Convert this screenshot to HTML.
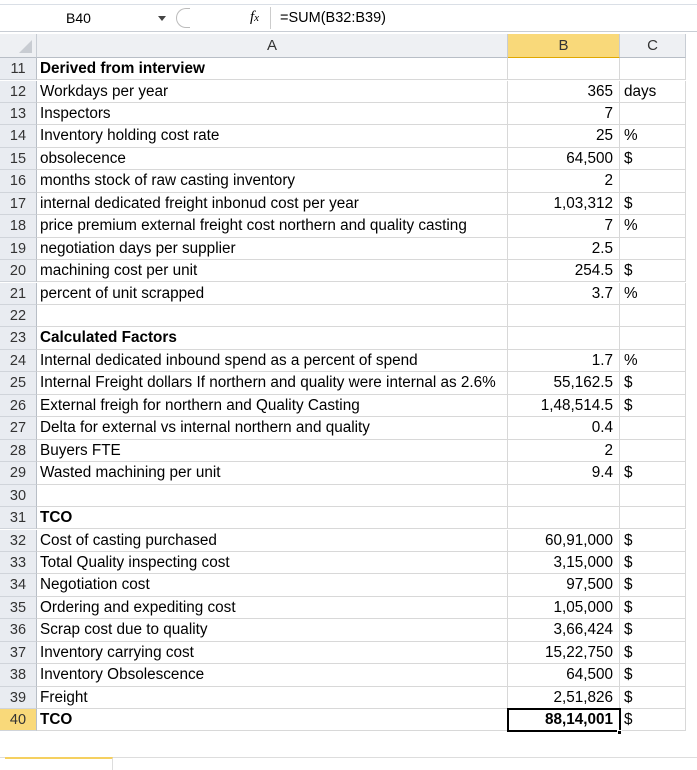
<!DOCTYPE html>
<html><head><meta charset="utf-8"><style>
*{margin:0;padding:0;box-sizing:border-box}
body{width:697px;height:770px;background:#fff;font-family:"Liberation Sans",sans-serif;position:relative;overflow:hidden}
.fb{position:absolute;top:4px;left:0;width:697px;height:28px;border-top:1px solid #dadfe6;border-bottom:1px solid #c8cdd4;background:#fff}
.hdr{position:absolute;top:34px;height:24px;background:#eef0f3;border-bottom:1px solid #b8bec6;font-size:15px;color:#333;text-align:center;line-height:24px;border-right:1px solid #c8cdd4}
.rh{position:absolute;left:0;width:37px;background:#e9ecf1;border-right:1px solid #b8bec6;border-bottom:1px solid #d0d4da;text-align:center;font-size:14.5px;color:#333}
.c{position:absolute;border-right:1px solid #d8d8d8;border-bottom:1px solid #d8d8d8;font-size:15.3px;white-space:nowrap;overflow:visible;color:#000;padding:0 3px}
.b{font-weight:bold}
</style></head><body>
<div class="fb">
<div style="position:absolute;left:66px;top:5px;font-size:14px">B40</div>
<div style="position:absolute;left:158px;top:11px;width:0;height:0;border-left:4px solid transparent;border-right:4px solid transparent;border-top:5px solid #444"></div>
<div style="position:absolute;left:176px;top:3px;width:14px;height:20px;border:1px solid #bbb;border-right:none;border-radius:10px 0 0 10px"></div>
<div style="position:absolute;left:250px;top:4px;font-size:15px;font-style:italic;font-family:'Liberation Serif',serif">f<span style="font-size:11px">x</span></div>
<div style="position:absolute;left:270px;top:2px;width:1px;height:22px;background:#ccc"></div>
<div style="position:absolute;left:280px;top:5px;font-size:14.5px">=SUM(B32:B39)</div>
</div>
<div class="hdr" style="left:0;width:37px;background:#eef0f3"><div style="position:absolute;right:4px;bottom:4px;width:0;height:0;border-left:13px solid transparent;border-bottom:13px solid #c8ccd2"></div></div>
<div class="hdr" style="left:37px;width:471px">A</div>
<div class="hdr" style="left:508px;width:112px;background:#f9d97a;border-bottom:1px solid #e0a800">B</div>
<div class="hdr" style="left:620px;width:66px">C</div>
<div id="g"></div>
<div style="position:absolute;left:0;top:757px;width:697px;height:13px;border-top:1px solid #ddd;background:#fff"></div>
<div style="position:absolute;left:5px;top:757px;width:108px;height:13px;border-top:2px solid #f5d060;border-right:1px solid #ddd"></div>
<script>
var rows=[
[11,"Derived from interview","","",1],
[12,"Workdays per year","365","days"],
[13,"Inspectors","7",""],
[14,"Inventory holding cost rate","25","%"],
[15,"obsolecence","64,500","$"],
[16,"months stock of raw casting inventory","2",""],
[17,"internal dedicated freight inbonud cost per year","1,03,312","$"],
[18,"price premium external freight cost northern and quality casting","7","%"],
[19,"negotiation days per supplier","2.5",""],
[20,"machining cost per unit","254.5","$"],
[21,"percent of unit scrapped","3.7","%"],
[22,"","",""],
[23,"Calculated Factors","","",1],
[24,"Internal dedicated inbound spend as a percent of spend","1.7","%"],
[25,"Internal Freight dollars If northern and quality were internal as 2.6%","55,162.5","$"],
[26,"External freigh for northern and Quality Casting","1,48,514.5","$"],
[27,"Delta for external vs internal northern and quality","0.4",""],
[28,"Buyers FTE","2",""],
[29,"Wasted machining per unit","9.4","$"],
[30,"","",""],
[31,"TCO","","",1],
[32,"Cost of casting purchased","60,91,000","$"],
[33,"Total Quality inspecting cost","3,15,000","$"],
[34,"Negotiation cost","97,500","$"],
[35,"Ordering and expediting cost","1,05,000","$"],
[36,"Scrap cost due to quality","3,66,424","$"],
[37,"Inventory carrying cost","15,22,750","$"],
[38,"Inventory Obsolescence","64,500","$"],
[39,"Freight","2,51,826","$"],
[40,"TCO","88,14,001","$",1]];
var h="",y=58,rh=22.45;
rows.forEach(function(r,i){
var t=(y+i*rh).toFixed(1),hh=rh.toFixed(2),lh="line-height:"+hh+"px;top:"+t+"px;height:"+hh+"px;";
var sel=r[0]==40;
h+='<div class="rh" style="'+lh+(sel?'background:#f9d97a;':'')+'">'+r[0]+'</div>';
h+='<div class="c'+(r[4]?' b':'')+'" style="'+lh+'left:37px;width:471px">'+r[1]+'</div>';
h+='<div class="c'+(sel?' b':'')+'" style="'+lh+'left:508px;width:112px;text-align:right;padding-right:6px">'+r[2]+'</div>';
h+='<div class="c" style="'+lh+'left:620px;width:66px;padding-left:4px">'+r[3]+'</div>';
});
h+='<div style="position:absolute;left:507px;top:'+(y+29*rh-1).toFixed(1)+'px;width:114px;height:'+(rh+2).toFixed(1)+'px;border:2px solid #000"></div>';
h+='<div style="position:absolute;left:617px;top:'+(y+30*rh-2).toFixed(1)+'px;width:5px;height:5px;background:#000;border:1px solid #fff"></div>';
document.getElementById('g').innerHTML=h;
</script>
</body></html>
